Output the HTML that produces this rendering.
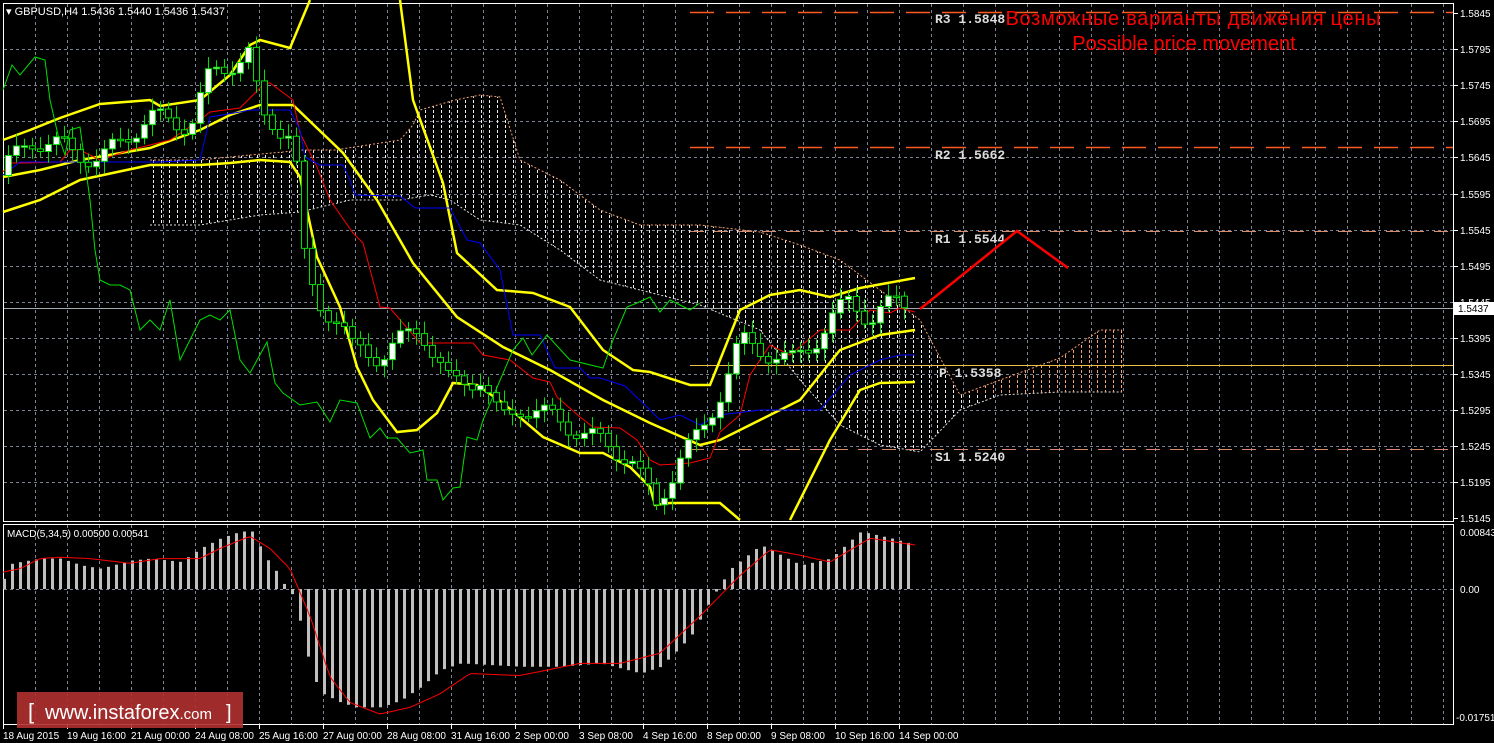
<!DOCTYPE html><html><head><meta charset="utf-8"><style>
html,body{margin:0;padding:0;background:#000;width:1494px;height:743px;overflow:hidden}
svg{display:block}
</style></head><body>
<svg id="s" width="1494" height="743" xmlns="http://www.w3.org/2000/svg" font-family="Liberation Sans, sans-serif">
<defs>
<pattern id="hw" width="8" height="5" patternUnits="userSpaceOnUse"><line x1="1.5" y1="0" x2="1.5" y2="3" stroke="#eee" stroke-width="1"/></pattern>
<pattern id="ho" width="8" height="5" patternUnits="userSpaceOnUse"><line x1="1.5" y1="0" x2="1.5" y2="3" stroke="#f4a070" stroke-width="1"/></pattern>
</defs>
<g id="g"></g>
</svg>
<script>
var g=document.getElementById('g'),h='';
function Y(p){return 13+(1.5845-p)/0.005*36.1}
h+='<rect x="3.5" y="3.5" width="1450" height="518" fill="none" stroke="#fff"/>';
h+='<rect x="3.5" y="524.5" width="1450" height="200" fill="none" stroke="#fff"/>';
for(var x=35;x<1453;x+=32){h+='<line x1="'+x+'.5" y1="4" x2="'+x+'.5" y2="521" stroke="#7b8593" stroke-dasharray="3,3"/>';h+='<line x1="'+x+'.5" y1="525" x2="'+x+'.5" y2="724" stroke="#7b8593" stroke-dasharray="3,3"/>'}
var labs=['1.5845','1.5795','1.5745','1.5695','1.5645','1.5595','1.5545','1.5495','1.5445','1.5395','1.5345','1.5295','1.5245','1.5195','1.5145'];
for(var i=0;i<labs.length;i++){var y=Math.round(13+i*36.1);if(i>0&&i<14)h+='<line x1="4" y1="'+y+'.5" x2="1453" y2="'+y+'.5" stroke="#7b8593" stroke-dasharray="3,3"/>';h+='<line x1="1453" y1="'+y+'.5" x2="1458" y2="'+y+'.5" stroke="#fff"/><text x="1460" y="'+(y+4)+'" fill="#fff" font-size="10">'+labs[i]+'</text>'}
h+='<line x1="4" y1="589.5" x2="1453" y2="589.5" stroke="#7b8593" stroke-dasharray="3,3"/>';
h+='<text x="1460" y="536" fill="#fff" font-size="10">0.00843</text><text x="1460" y="593" fill="#fff" font-size="10">0.00</text><text x="1456" y="721" fill="#fff" font-size="10">-0.01751</text>';
var tl=[[3,'18 Aug 2015'],[67,'19 Aug 16:00'],[131,'21 Aug 00:00'],[195,'24 Aug 08:00'],[259,'25 Aug 16:00'],[323,'27 Aug 00:00'],[387,'28 Aug 08:00'],[451,'31 Aug 16:00'],[515,'2 Sep 00:00'],[579,'3 Sep 08:00'],[643,'4 Sep 16:00'],[707,'8 Sep 00:00'],[771,'9 Sep 08:00'],[835,'10 Sep 16:00'],[899,'14 Sep 00:00']];
tl.forEach(function(t){h+='<line x1="'+(t[0]+.5)+'" y1="724" x2="'+(t[0]+.5)+'" y2="729" stroke="#fff"/><text x="'+t[0]+'" y="739" fill="#fff" font-size="10">'+t[1]+'</text>'});
function P(a){return a.map(function(p){return p[0]+','+p[1]}).join(' ')}
function interp(k,x){for(var i=0;i<k.length-1;i++){if(x>=k[i][0]&&x<=k[i+1][0]){var t=(x-k[i][0])/(k[i+1][0]-k[i][0]);return k[i][1]+t*(k[i+1][1]-k[i][1])}}return k[k.length-1][1]}
var up=[[150,160],[200,160],[250,155],[283,152],[300,150],[335,150],[400,140],[413,125],[420,110],[455,100],[480,95],[500,97],[520,160],[560,180],[600,210],[640,225],[700,225],[760,232],[800,245],[840,260],[880,290],[920,320],[960,395],[1000,380],[1060,358],[1100,330],[1122,330]];
var lo=[[150,225],[200,225],[260,215],[300,212],[350,200],[400,200],[430,195],[450,200],[480,220],[520,225],[560,250],[600,280],[640,290],[700,305],[760,330],[800,380],[840,425],[880,445],[920,452],[960,410],[1000,395],[1060,392],[1122,392]];
h+='<polygon points="'+P(up)+' '+P(lo.slice().reverse())+'" fill="url(#hw)"/>';
h+='<polyline points="'+P(up)+'" fill="none" stroke="#f4a070" stroke-dasharray="2,2"/><polyline points="'+P(lo)+'" fill="none" stroke="#ddd" stroke-dasharray="2,2"/>';
h+='<polygon points="960,395 1000,380 1060,358 1100,330 1122,330 1122,392 1060,392 1000,395" fill="url(#ho)"/>';
h+='<line x1="690" y1="12.5" x2="1453" y2="12.5" stroke="#ff5a1e" stroke-width="1.5" stroke-dasharray="24,12"/>';
h+='<line x1="690" y1="147.5" x2="1453" y2="147.5" stroke="#ff5a1e" stroke-width="1.5" stroke-dasharray="24,12"/>';
h+='<line x1="690" y1="231.5" x2="1453" y2="231.5" stroke="#d98a6a" stroke-dasharray="14,10"/>';
h+='<line x1="690" y1="365.5" x2="1453" y2="365.5" stroke="#f0c040"/>';
h+='<line x1="690" y1="449.5" x2="1453" y2="449.5" stroke="#d98a6a" stroke-dasharray="14,10"/>';
h+='<line x1="4" y1="308.5" x2="1453" y2="308.5" stroke="#a0a8b0"/>';
var mono='font-family="Liberation Mono, monospace" font-size="13" font-weight="bold" fill="#ddd"';
h+='<text x="935" y="23" '+mono+'>R3 1.5848</text><text x="935" y="159" '+mono+'>R2 1.5662</text><text x="935" y="243" '+mono+'>R1 1.5544</text><text x="939" y="377" '+mono+'>P 1.5358</text><text x="935" y="461" '+mono+'>S1 1.5240</text>';
h+='<text x="1193" y="25" text-anchor="middle" fill="#f00" font-size="20" textLength="375">Возможные варианты движения цены</text><text x="1184" y="50" text-anchor="middle" fill="#f00" font-size="20">Possible price movement</text>';
var Yel='fill="none" stroke="#ffff00" stroke-width="2.5"';
h+='<polyline '+Yel+' points="3,140 30,130 60,118 100,104 150,100 160,106 200,100 230,75 250,45 260,40 290,48 310,0"/>';
h+='<polyline '+Yel+' points="3,212 40,200 80,180 150,165 200,165 230,163 260,160 290,162 300,177 317,257 340,307 357,367 373,400 397,432 417,430 437,413 453,383 477,385 503,403 543,437 580,453 603,453 630,467 650,487 655,505 670,503 720,503 740,520"/>';
h+='<polyline '+Yel+' points="3,177 40,170 80,160 150,148 200,130 230,115 260,105 293,105 343,153 377,200 413,263 457,317 503,347 550,370 603,400 650,423 700,445 720,440 760,420 800,400 840,350 880,335 915,330"/>';
h+='<polyline '+Yel+' points="400,0 413,100 443,183 457,253 497,290 533,293 570,307 603,350 633,370 650,372 690,385 710,385 740,310 770,295 800,290 830,297 860,288 915,278"/>';
h+='<polyline '+Yel+' points="790,520 830,440 860,390 880,383 915,382"/>';
h+='<polyline fill="none" stroke="#f00" points="3,172 10,163 25,163 60,162 70,150 80,150 100,160 130,150 170,140 200,120 210,112 240,108 265,83 270,83 293,100 300,133 317,167 330,200 353,233 363,243 380,307 390,308 420,343 473,343 483,355 510,360 533,378 550,382 557,397 580,417 593,427 620,428 637,440 650,460 660,465 690,463 710,458 720,432 740,415 750,375 770,345 790,355 820,330 850,330 870,310 890,313 900,308 915,312"/>';
h+='<polyline fill="none" stroke="#00f" points="3,175 20,162 60,162 110,162 160,162 200,160 210,117 240,112 250,110 290,110 300,130 305,157 320,165 343,165 350,180 355,195 400,196 415,208 450,208 467,240 480,243 500,270 513,335 540,335 555,368 580,368 590,378 600,378 625,386 650,410 660,420 680,415 700,425 720,415 760,410 820,410 850,375 880,360 900,355 915,355"/>';
h+='<polyline fill="none" stroke="#00e000" points="3,90 12,65 20,75 35,57 45,60 50,100 58,135 65,155 70,130 80,127 90,200 95,250 100,280 110,285 120,285 130,290 140,330 150,320 160,330 170,300 180,360 190,340 200,320 210,315 220,320 230,310 240,360 250,373 267,342 275,383 283,393 300,405 317,402 330,422 340,400 357,403 370,438 380,428 387,438 397,438 410,453 423,450 427,480 437,480 443,500 453,488 460,487 467,437 477,440 483,420 513,350 523,338 532,355 547,335 570,360 603,368 613,340 627,307 637,303 650,297 660,312 670,300 680,305 690,310 700,303"/>';
var ck=[[5,1.563],[30,1.567],[60,1.566],[100,1.564],[130,1.568],[150,1.570],[190,1.569],[210,1.576],[250,1.579],[260,1.570],[290,1.568],[300,1.560],[305,1.548],[320,1.544],[340,1.542],[350,1.538],[380,1.537],[420,1.541],[450,1.533],[480,1.534],[500,1.528],[520,1.530],[560,1.528],[600,1.525],[630,1.523],[655,1.516],[680,1.523],[700,1.526],[720,1.532],[740,1.539],[760,1.538],[790,1.536],[820,1.540],[850,1.545],[870,1.542],[900,1.545],[910,1.5437]];
var prev=Y(1.562);
for(var x=8;x<=908;x+=8){var c=Y(interp(ck,x)+(Math.sin(x*1.7)*0.0015)),o=prev,t=Math.min(o,c)-4-Math.abs(Math.sin(x*0.9))*8,b=Math.max(o,c)+4+Math.abs(Math.cos(x*1.3))*8;
h+='<line x1="'+(x+.5)+'" y1="'+t+'" x2="'+(x+.5)+'" y2="'+b+'" stroke="#00e000"/>';
var bt=Math.min(o,c),bh=Math.max(Math.abs(o-c),1.5);h+='<rect x="'+(x-2.5)+'" y="'+bt+'" width="6" height="'+bh+'" fill="'+(c<o?'#fff':'#000')+'" stroke="#00e000"/>';prev=c;}
h+='<polyline points="920,309 1017,231 1068,268" fill="none" stroke="#f00" stroke-width="2.5"/>';
h+='<rect x="1454" y="302" width="40" height="13" fill="#fff"/><text x="1458" y="312" fill="#000" font-size="10">1.5437</text>';
h+='<text x="6" y="15" fill="#fff" font-size="11">▾ GBPUSD,H4  1.5436 1.5440 1.5436 1.5437</text>';
h+='<text x="7" y="537" fill="#fff" font-size="10">MACD(5,34,5) 0.00500 0.00541</text>';
function MY(v){return 589-v/0.00843*57}
var mk=[[3,0.0015],[10,0.0037],[20,0.004],[40,0.0045],[60,0.0045],[80,0.0035],[100,0.003],[130,0.0042],[150,0.0045],[180,0.004],[200,0.006],[220,0.0075],[240,0.0085],[252,0.0085],[260,0.006],[268,0.004],[276,0.0025],[284,0.0005],[290,-0.0003],[298,-0.004],[306,-0.0095],[314,-0.0135],[322,-0.0155],[340,-0.0168],[355,-0.0175],[380,-0.0175],[400,-0.0165],[420,-0.0145],[440,-0.012],[460,-0.011],[520,-0.0115],[560,-0.0115],[600,-0.011],[640,-0.0125],[660,-0.0115],[690,-0.007],[710,-0.0015],[730,0.003],[760,0.0065],[800,0.0035],[830,0.0045],[860,0.0085],[890,0.0075],[915,0.0065]];
for(var x=3;x<=914;x+=8){var v=interp(mk,x),y=MY(v);h+='<rect x="'+x+'" y="'+Math.min(y,589)+'" width="3" height="'+Math.abs(y-589)+'" fill="#c0c0c0"/>';}
var sk=[[3,0.0025],[20,0.003],[40,0.0045],[60,0.0047],[90,0.0045],[130,0.0038],[160,0.0045],[200,0.0045],[220,0.006],[250,0.0078],[270,0.006],[290,0.003],[310,-0.004],[330,-0.013],[350,-0.0168],[380,-0.0185],[410,-0.0175],[440,-0.0155],[470,-0.0125],[520,-0.0128],[580,-0.011],[620,-0.011],[660,-0.0095],[700,-0.004],[740,0.002],[770,0.0058],[800,0.005],[830,0.004],[870,0.0075],[915,0.0065]],sp=[];
for(var x=3;x<=915;x+=4)sp.push([x,MY(interp(sk,x)).toFixed(1)]);
h+='<polyline points="'+P(sp)+'" fill="none" stroke="#f00"/>';
h+='<rect x="17" y="692" width="226" height="36" fill="#b03030" opacity="0.9"/><text x="28" y="719" fill="#fff" font-size="22">[</text><text x="45" y="719" fill="#fff" font-size="20">www.instaforex<tspan font-size="15">.com</tspan></text><text x="226" y="719" fill="#fff" font-size="20">]</text>';
g.innerHTML=h;
</script>
</body></html>
